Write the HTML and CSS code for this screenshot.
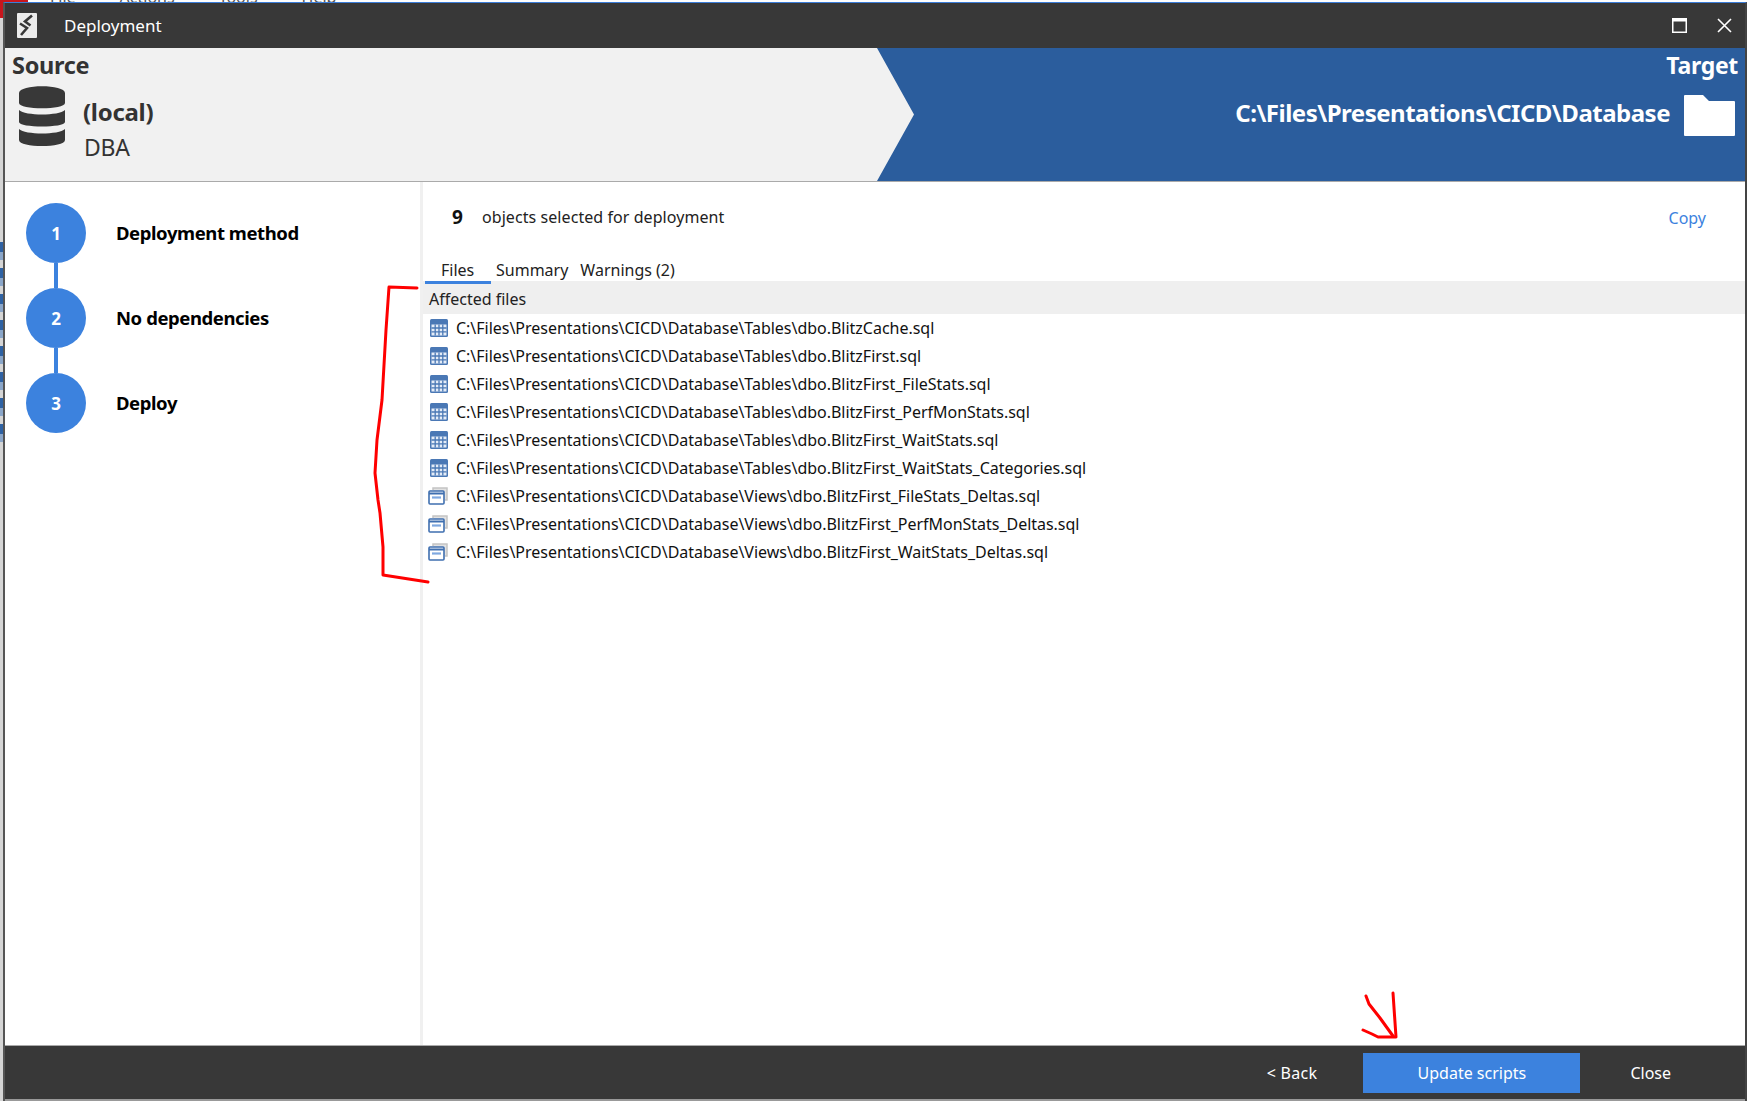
FILE: index.html
```html
<!DOCTYPE html>
<html lang="en">
<head>
    <meta charset="UTF-8">
    <title>Deployment</title>
    <link rel="stylesheet" href="styles.css">
</head>
<body>
<div class="behind-top">
    <span class="behind-menu">File</span>
    <span class="behind-menu">Actions</span>
    <span class="behind-menu">Tools</span>
    <span class="behind-menu">Help</span>
</div>
<div class="desktop">
    <div class="behind-left"></div>
    <div class="window">
        <div class="titlebar">
            <svg class="logo" viewBox="0 0 20 25">
                <rect width="20" height="25" rx="1" fill="#ececec"/>
                <path d="M15 2.5 L8 8.5 L13.5 12.5" fill="none" stroke="#383838" stroke-width="2.6"/>
                <path d="M3 10.5 L10 15 L4 22" fill="none" stroke="#383838" stroke-width="2.6"/>
            </svg>
            <span class="title">Deployment</span>
            <svg class="win-btn max-btn" viewBox="0 0 15 15">
                <rect x="0.75" y="0.75" width="13.5" height="13.5" fill="none" stroke="#fff" stroke-width="1.5"/>
                <rect x="0" y="0" width="15" height="3.5" fill="#fff"/>
            </svg>
            <svg class="win-btn close-btn" viewBox="0 0 15 15">
                <path d="M1 1 L14 14 M14 1 L1 14" stroke="#fff" stroke-width="1.6"/>
            </svg>
        </div>

        <div class="header">
            <div class="source">
                <div class="header-label">Source</div>
                <div class="source-info">
                    <svg class="db-icon" viewBox="0 0 46 60">
                        <path d="M0 7 C0 -2 46 -2 46 7 L46 17 C46 24 0 24 0 17 Z" fill="#383838"/>
                        <path d="M0 24 C6 30 40 30 46 24 L46 36 C46 42 0 42 0 36 Z" fill="#383838"/>
                        <path d="M0 43 C6 49 40 49 46 43 L46 54 C46 62 0 62 0 54 Z" fill="#383838"/>
                    </svg>
                    <div class="source-text">
                        <div class="server">(local)</div>
                        <div class="database">DBA</div>
                    </div>
                </div>
            </div>
            <div class="target">
                <div class="header-label">Target</div>
                <div class="target-info">
                    <span class="target-path">C:\Files\Presentations\CICD\Database</span>
                    <svg class="folder-icon" viewBox="0 0 51 41">
                        <path d="M1 0 L19 0 L25 6 L50 6 Q51 6 51 7 L51 40 Q51 41 50 41 L1 41 Q0 41 0 40 L0 1 Q0 0 1 0 Z" fill="#fff"/>
                    </svg>
                </div>
            </div>
        </div>

        <div class="main">
            <div class="steps">
                <div class="step">
                    <div class="step-num">1</div>
                    <div class="step-label">Deployment method</div>
                </div>
                <div class="step">
                    <div class="step-num">2</div>
                    <div class="step-label">No dependencies</div>
                </div>
                <div class="step last">
                    <div class="step-num">3</div>
                    <div class="step-label">Deploy</div>
                </div>
            </div>

            <div class="content">
                <div class="summary-row">
                    <span class="count">9</span>
                    <span class="count-text">objects selected for deployment</span>
                    <a class="copy-link">Copy</a>
                </div>
                <div class="tabs">
                    <span class="tab active">Files</span>
                    <span class="tab">Summary</span>
                    <span class="tab">Warnings (2)</span>
                </div>
                <div class="list-head">Affected files</div>
                <ul class="file-list">
                    <li><svg class="file-icon"><use href="#icon-table"/></svg>C:\Files\Presentations\CICD\Database\Tables\dbo.BlitzCache.sql</li>
                    <li><svg class="file-icon"><use href="#icon-table"/></svg>C:\Files\Presentations\CICD\Database\Tables\dbo.BlitzFirst.sql</li>
                    <li><svg class="file-icon"><use href="#icon-table"/></svg>C:\Files\Presentations\CICD\Database\Tables\dbo.BlitzFirst_FileStats.sql</li>
                    <li><svg class="file-icon"><use href="#icon-table"/></svg>C:\Files\Presentations\CICD\Database\Tables\dbo.BlitzFirst_PerfMonStats.sql</li>
                    <li><svg class="file-icon"><use href="#icon-table"/></svg>C:\Files\Presentations\CICD\Database\Tables\dbo.BlitzFirst_WaitStats.sql</li>
                    <li><svg class="file-icon"><use href="#icon-table"/></svg>C:\Files\Presentations\CICD\Database\Tables\dbo.BlitzFirst_WaitStats_Categories.sql</li>
                    <li><svg class="file-icon"><use href="#icon-view"/></svg>C:\Files\Presentations\CICD\Database\Views\dbo.BlitzFirst_FileStats_Deltas.sql</li>
                    <li><svg class="file-icon"><use href="#icon-view"/></svg>C:\Files\Presentations\CICD\Database\Views\dbo.BlitzFirst_PerfMonStats_Deltas.sql</li>
                    <li><svg class="file-icon"><use href="#icon-view"/></svg>C:\Files\Presentations\CICD\Database\Views\dbo.BlitzFirst_WaitStats_Deltas.sql</li>
                </ul>
            </div>
        </div>

        <div class="footer">
            <button class="foot-btn back-btn">&lt; Back</button>
            <button class="foot-btn update-btn">Update scripts</button>
            <button class="foot-btn close-foot">Close</button>
        </div>
    </div>
</div>

<!-- red pen marks on top of the screenshot -->
<svg class="pen" viewBox="0 0 1747 1101">
    <path d="M417 288 L389 287 L386 330 L382 400 L377 440 L375 473 L378 500 L380 513 L383 547 L383 575 L428 582"/>
    <path d="M1393 993 L1396 1037 L1378 1037 L1372 1034 L1363 1030"/>
    <path d="M1366 996 L1369 1004 L1380 1018 L1393 1036"/>
</svg>

<svg class="icon-defs">
    <symbol id="icon-table" viewBox="0 0 20 18">
        <rect x="2" y="0" width="18" height="18" rx="1.5" fill="#4a78b5"/>
        <path d="M3.5 5.5h15v11h-15z" fill="#e4ecf7"/>
        <path d="M7.2 5.5v11M11 5.5v11M14.8 5.5v11M3.5 9h15M3.5 12.8h15" stroke="#4a78b5" stroke-width="1.3"/>
    </symbol>
    <symbol id="icon-view" viewBox="0 0 20 18">
        <path d="M5 3V1h14v12h-2" fill="#e2e2e2" stroke="#c4c4c4" stroke-width="1.5"/>
        <rect x="1" y="4" width="15" height="13" rx="1" fill="#fff" stroke="#3f6fb0" stroke-width="1.6"/>
        <path d="M1 6.5h15" stroke="#3f6fb0" stroke-width="2"/>
        <path d="M4 10.5h9" stroke="#7fa8e0" stroke-width="2.2"/>
    </symbol>
</svg>
</body>
</html>
```

FILE: styles.css
```css
* {
    box-sizing: border-box;
}

html, body {
    margin: 0;
    height: 1101px;
    overflow: hidden;
}

body {
    font-family: "Noto Sans", "Open Sans", sans-serif;
    background: #fff;
    color: #222;
    position: relative;
}

.behind-top {
    height: 2px;
    overflow: hidden;
    display: flex;
    gap: 44px;
    padding-left: 22px;
    font-size: 16px;
    line-height: 14px;
    color: #555;
    border-left: 28px solid #c8161d;
}

.behind-menu {
    display: block;
    margin-top: -10px;
}

.desktop {
    display: flex;
    height: 1099px;
}

.behind-left {
    width: 3px;
    background:
        repeating-linear-gradient(to bottom, #2f62a3 0, #2f62a3 10px, #8aa6c9 10px, #8aa6c9 18px, #d5d5d5 18px, #d5d5d5 26px) 0 240px / 3px 208px no-repeat,
        linear-gradient(to bottom, #c8161d 0, #c8161d 16px, #d5d5d5 16px);
}

.window {
    flex: 1;
    display: flex;
    flex-direction: column;
    border-top: 1px solid #3b7dd8;
    border-left: 2px solid #555;
    border-right: 2px solid #444;
    background: #fff;
}

.titlebar {
    height: 45px;
    background: #383838;
    color: #fff;
    display: flex;
    align-items: center;
    padding-left: 12px;
}

.logo {
    width: 20px;
    height: 25px;
}

.title {
    margin-left: 27px;
    font-size: 17px;
    flex: 1;
}

.win-btn {
    width: 15px;
    height: 15px;
}

.max-btn {
    margin-right: 30px;
}

.close-btn {
    margin-right: 13px;
}

.header {
    height: 134px;
    display: flex;
    background: #f1f1f1;
    border-bottom: 1px solid #aaa;
}

.source {
    width: 872px;
    padding: 2px 0 0 7px;
}

.header-label {
    font-size: 23.5px;
    font-weight: 700;
    line-height: 30px;
    color: #333;
    letter-spacing: -0.3px;
}

.source-info {
    display: flex;
    margin-left: 7px;
    margin-top: 6px;
}

.db-icon {
    width: 46px;
    height: 60px;
}

.source-text {
    margin-left: 18px;
}

.server {
    font-size: 24px;
    font-weight: 700;
    line-height: 32px;
    margin-top: 10px;
    color: #333;
    letter-spacing: -0.3px;
}

.database {
    font-size: 23px;
    line-height: 32px;
    margin-left: 1px;
    margin-top: 3px;
    color: #333;
    letter-spacing: -0.3px;
}

.target {
    flex: 1;
    background: #2b5d9d;
    clip-path: polygon(0 0, 100% 0, 100% 100%, 0 100%, 37px 50%);
    color: #fff;
    padding: 2px 7px 0 0;
    text-align: right;
}

.target .header-label {
    color: #fff;
    font-size: 23px;
}

.target-info {
    display: flex;
    justify-content: flex-end;
    align-items: center;
    margin-top: 15px;
}

.target-path {
    font-size: 24px;
    font-weight: 700;
    letter-spacing: -0.5px;
    margin-right: 14px;
    margin-top: -7px;
}

.folder-icon {
    width: 51px;
    height: 41px;
    margin-right: 3px;
}

.main {
    flex: 1;
    display: flex;
    min-height: 0;
}

.steps {
    width: 418px;
    padding: 21px 0 0 21px;
    border-right: 3px solid #f0f0f0;
    flex-shrink: 0;
}

.step {
    display: flex;
    align-items: center;
    height: 60px;
    margin-bottom: 25px;
    position: relative;
}

.step::after {
    content: "";
    position: absolute;
    left: 28px;
    top: 60px;
    width: 4px;
    height: 25px;
    background: #3c82de;
}

.step.last::after {
    display: none;
}

.step-num {
    width: 60px;
    height: 60px;
    border-radius: 50%;
    background: #3c82de;
    color: #fff;
    font-weight: 700;
    font-size: 17px;
    display: flex;
    align-items: center;
    justify-content: center;
}

.step-label {
    margin-left: 30px;
    padding-bottom: 2px;
    font-size: 18.5px;
    font-weight: 700;
    color: #000;
    letter-spacing: -0.42px;
}

.content {
    flex: 1;
    min-width: 0;
}

.summary-row {
    display: flex;
    align-items: center;
    height: 36px;
    margin-top: 17px;
    padding-left: 29px;
    font-size: 16px;
}

.count {
    font-size: 19px;
    font-weight: 700;
    color: #111;
    width: 30px;
}

.count-text {
    flex: 1;
    letter-spacing: 0.07px;
}

.copy-link {
    color: #3c82de;
    margin-top: 2px;
    margin-right: 39px;
    font-size: 16px;
}

.tabs {
    display: flex;
    height: 26px;
    margin-top: 23px;
    margin-left: 2px;
    font-size: 16px;
    line-height: 24px;
    position: relative;
}

.tab {
    padding: 0 5px;
    margin-right: 2px;
}

.tab.active {
    width: 66px;
    padding: 0 16px;
    border-bottom: 3px solid #3c82de;
    margin-right: 0;
}

.list-head {
    height: 33px;
    margin-top: -3px;
    background: #efefef;
    padding: 2px 0 0 6px;
    line-height: 33px;
    font-size: 16px;
}

.file-list {
    list-style: none;
    margin: 0;
    padding: 0;
    font-size: 16px;
    letter-spacing: -0.02px;
    color: #111;
}

.file-list li {
    display: flex;
    align-items: center;
    height: 28px;
    padding-left: 5px;
}

.file-icon {
    width: 20px;
    height: 18px;
    margin-right: 8px;
    flex-shrink: 0;
}

.footer {
    height: 56px;
    background: #383838;
    border-top: 1px solid #aaa;
    border-bottom: 2px solid #999;
    display: flex;
    align-items: center;
    justify-content: flex-end;
}

.foot-btn {
    font-family: inherit;
    font-size: 16px;
    color: #fff;
    background: none;
    border: none;
    padding: 0;
    height: 40px;
}

.back-btn {
    margin-right: 46px;
    letter-spacing: 0.3px;
}

.update-btn {
    background: #3c82de;
    width: 217px;
}

.close-foot {
    margin-left: 50px;
    margin-right: 74px;
}

.pen {
    position: absolute;
    left: 0;
    top: 0;
    width: 1747px;
    height: 1101px;
    pointer-events: none;
}

.pen path {
    fill: none;
    stroke: #f00;
    stroke-width: 3;
    stroke-linejoin: round;
    stroke-linecap: round;
}

.icon-defs {
    position: absolute;
    width: 0;
    height: 0;
}
```
